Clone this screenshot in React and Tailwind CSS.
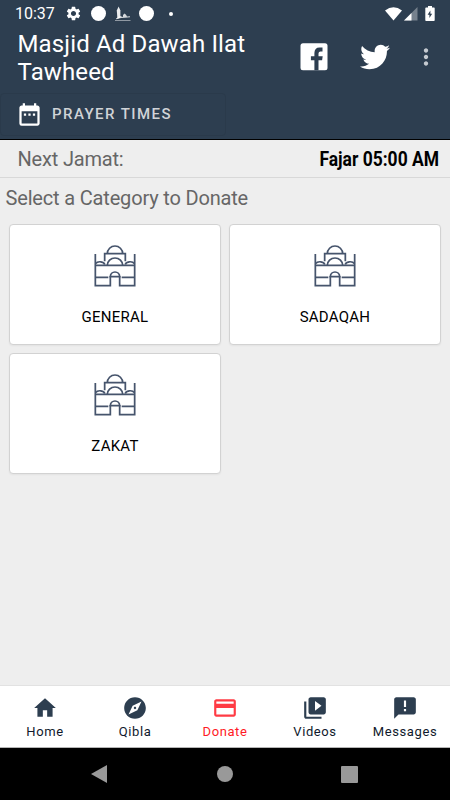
import { MdSettings, MdHome, MdExplore, MdCreditCard, MdVideoLibrary, MdAnnouncement, MdDateRange, MdMoreVert } from "react-icons/md";
import { FaTwitter } from "react-icons/fa";

const categories = ["GENERAL", "SADAQAH", "ZAKAT"];

const tabs = [
  { label: "Home", Icon: MdHome },
  { label: "Qibla", Icon: MdExplore },
  { label: "Donate", Icon: MdCreditCard, active: true },
  { label: "Videos", Icon: MdVideoLibrary },
  { label: "Messages", Icon: MdAnnouncement },
];

function MosqueIcon() {
  return (
    <svg viewBox="0 0 126 129" className="w-[42px] h-[43px]" fill="none" stroke="#46546c" strokeWidth="5.2">
      <path d="M4 30v95h45V96M77 96v29h45V30" />
      <path d="M4 64h118M4 100h39M83 100h39" />
      <path d="M32 52V29h62v23" />
      <path d="M40 29a23 23 0 0 1 46 0M40 64a23 22 0 0 1 46 0" />
      <path d="M5 59a14 9 0 0 1 27 3M94 62a14 9 0 0 1 27-3" />
      <path d="M49 98a14 14 0 0 1 28 0z" />
    </svg>
  );
}

function StatusBar() {
  return (
    <div className="h-[27px] flex items-center justify-between pl-[15px] pr-[15px] text-white">
      <div className="flex items-center">
        <span className="w-[50px] text-[16px] leading-[27px]">10:37</span>
        <MdSettings className="w-[17px] h-[17px]" />
        <span className="ml-[9px] w-[15px] h-[15px] rounded-full bg-white" />
        {/* small mosque skyline */}
        <svg viewBox="0 0 16 16" className="ml-[9px] w-4 h-4" fill="white">
          <path d="M0 14.2h15.5v.8H0z" opacity=".6" />
          <path d="M1.8 4.5 3.6.6l1.8 3.9v6.8l-3 1.6z" opacity=".9" />
          <path d="M1 12.6 5 10l3 1V9l1.6-1.6L11.2 9l.8 1.6 3-.4v1l-5 .6-4 .2-5 1.2z" opacity=".8" />
        </svg>
        <span className="ml-2 w-[15px] h-[15px] rounded-full bg-white" />
        <span className="ml-[15px] w-1 h-1 rounded-full bg-white" />
      </div>
      <div className="flex items-center">
        <svg viewBox="0 0 17 14" className="w-[17px] h-[14px]" fill="currentColor">
          <path d="M0 3.4Q8.5-3 17 3.4L8.5 13.5z" />
        </svg>
        <svg viewBox="0 0 14 14" className="ml-0.5 mt-px w-[14px] h-[14px]" fill="currentColor">
          <path d="M13.5 0v13.5H0z" opacity=".35" />
          <path d="M7.5 6v7.5H0z" />
        </svg>
        <svg viewBox="0 0 10 15" className="ml-[7px] w-[10px] h-[15px]">
          <path d="M3 0h4v1.5h2q.7 0 .7.7v12q0 .8-.8.8H1.1q-.8 0-.8-.8v-12q0-.7.8-.7H3z" fill="white" />
          <path d="M5.4 4.5 2.6 8.8h1.8V12l2.8-4.2H5.4z" fill="#2d3e50" />
        </svg>
      </div>
    </div>
  );
}

function Header() {
  return (
    <header className="h-[140px] bg-[#2d3e50] border-b border-black">
      <StatusBar />
      <div className="h-[66px] flex items-start text-white">
        <h1 className="w-[282px] pl-[17.5px] pt-[3px] text-[24px] leading-[28px] tracking-[0.14px]">
          Masjid Ad Dawah Ilat<br />Tawheed
        </h1>
        <svg viewBox="0 0 28 28" className="ml-[18px] mt-4 w-7 h-7">
          <rect x="0.5" y="0.3" width="27" height="27" rx="2.5" fill="white" />
          <path d="M14.4 27.3V17.3h-3.5v-4h3.5v-3.2q0-5.6 5.2-5.6H22.5v4h-2q-2 0-2 2.1v2.7h4.2l-.6 4h-3.6v10z" fill="#2d3e50" />
        </svg>
        <FaTwitter className="ml-8 mt-[15px] w-[30px] h-[30px]" />
        <MdMoreVert className="ml-[23px] mt-[17px] w-[26px] h-[26px] text-[#c5cad0]" />
      </div>
      <button className="h-[43px] w-[226px] flex items-center pl-[15px] rounded border border-[#2a3a4b]">
        <MdDateRange className="w-[27px] h-[27px] text-white" />
        <span className="ml-[9px] text-[15px] font-medium tracking-[1.45px] text-[#d0d3d7]">PRAYER TIMES</span>
      </button>
    </header>
  );
}

export default function App() {
  return (
    <div className="w-[450px] h-[800px] flex flex-col overflow-hidden bg-[#eeeeee] font-['Roboto',sans-serif]">
      <Header />

      <div className="h-[38px] shrink-0 flex items-center justify-between pl-[17.5px] pr-[11px] pt-px border-b border-[#d8d8d8]">
        <span className="text-[20px] tracking-[-0.18px] text-[#666666]">Next Jamat:</span>
        <span className="text-[20px] font-bold text-black origin-right scale-x-[0.873] whitespace-nowrap">Fajar 05:00 AM</span>
      </div>

      <main className="flex-1">
        <h2 className="h-[46px] pl-[5.5px] pt-[5px] text-[20px] leading-[30px] tracking-[-0.17px] text-[#666666]">Select a Category to Donate</h2>
        <div className="grid grid-cols-2 gap-x-2 gap-y-2 pl-[9px] pr-[9px]">
          {categories.map((name) => (
            <div key={name} className="h-[121px] flex flex-col items-center pt-[19px] rounded bg-white border border-[#d2d2d2] shadow-xs">
              <MosqueIcon />
              <span className="mt-[18px] text-[15px] tracking-[0.25px] leading-6 text-black">{name}</span>
            </div>
          ))}
        </div>
      </main>

      {/* Bottom tabs */}
      <nav className="h-[63px] shrink-0 grid grid-cols-5 bg-white border-t border-t-[#e2e2e2] border-b border-b-[#b5b5b5]">
        {tabs.map(({ label, Icon, active }) => (
          <div key={label} className={`flex flex-col items-center pt-[9px] ${active ? "text-[#ff3b44]" : "text-[#2d3e50]"}`}>
            <Icon className="w-[26px] h-[26px]" />
            <span className={`mt-0.5 text-[13px] leading-[18px] tracking-[0.6px] ${active ? "text-[#ff1a25]" : "text-[#10192c]"}`}>{label}</span>
          </div>
        ))}
      </nav>

      <div className="h-[52px] shrink-0 bg-black flex items-center text-[#999999]">
        <svg viewBox="0 0 16 18" className="ml-[91px] w-4 h-[18px]" fill="currentColor">
          <path d="M16 0v18L0 9z" />
        </svg>
        <span className="ml-[110px] w-4 h-4 rounded-full bg-[#999999]" />
        <span className="ml-[108px] w-[17px] h-[17px] rounded-[1px] bg-[#999999]" />
      </div>
    </div>
  );
}
